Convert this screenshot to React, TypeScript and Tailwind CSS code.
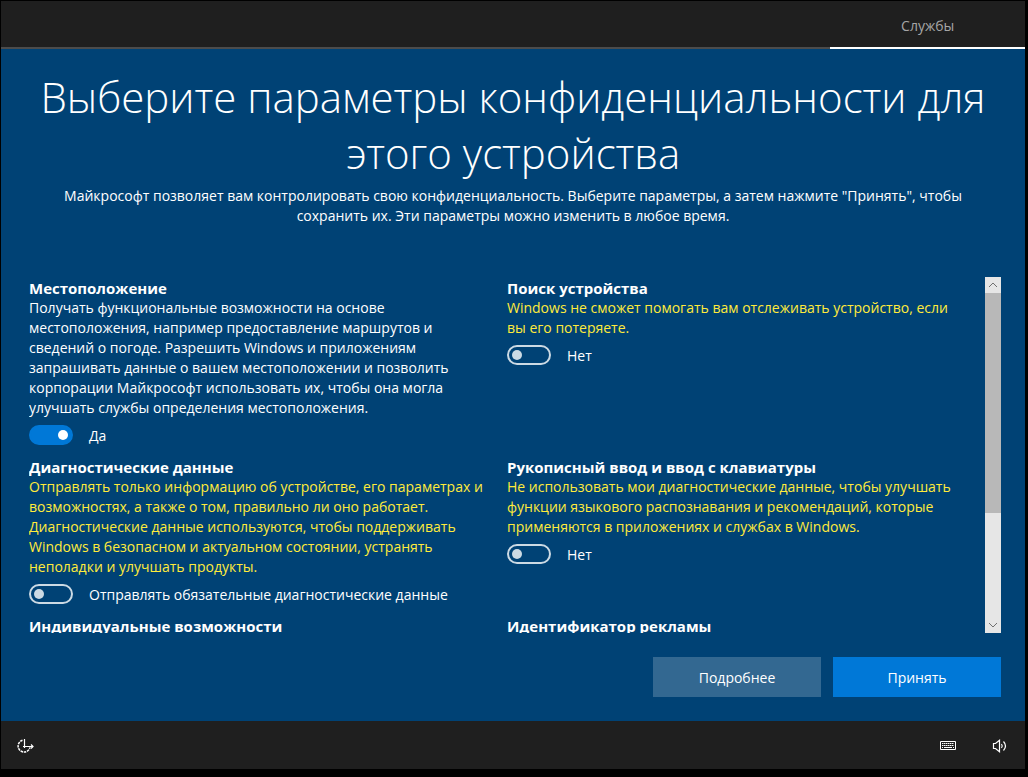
import { useState } from 'react';

interface Setting {
  id: string;
  title: string;
  enabledByDefault: boolean;
  text: string;
  state: { on: string; off: string };
}

const yesNo = { on: 'Да', off: 'Нет' };

const settings: Setting[] = [
  {
    id: 'location',
    title: 'Местоположение',
    enabledByDefault: true,
    text: 'Получать функциональные возможности на основе местоположения, например предоставление маршрутов и сведений о погоде. Разрешить Windows и приложениям запрашивать данные о вашем местоположении и позволить корпорации Майкрософт использовать их, чтобы она могла улучшать службы определения местоположения.',
    state: yesNo,
  },
  {
    id: 'find-device',
    title: 'Поиск устройства',
    enabledByDefault: false,
    text: 'Windows не сможет помогать вам отслеживать устройство, если вы его потеряете.',
    state: yesNo,
  },
  {
    id: 'diagnostics',
    title: 'Диагностические данные',
    enabledByDefault: false,
    text: 'Отправлять только информацию об устройстве, его параметрах и возможностях, а также о том, правильно ли оно работает. Диагностические данные используются, чтобы поддерживать Windows в безопасном и актуальном состоянии, устранять неполадки и улучшать продукты.',
    state: { on: 'Да', off: 'Отправлять обязательные диагностические данные' },
  },
  {
    id: 'inking',
    title: 'Рукописный ввод и ввод с клавиатуры',
    enabledByDefault: false,
    text: 'Не использовать мои диагностические данные, чтобы улучшать функции языкового распознавания и рекомендаций, которые применяются в приложениях и службах в Windows.',
    state: yesNo,
  },
];

function SettingItem({ setting }: { setting: Setting }) {
  const [enabled, setEnabled] = useState(setting.enabledByDefault);

  return (
    <section className="pr-5">
      <h2 className="text-[15px] leading-5 font-bold">{setting.title}</h2>
      <p className={enabled ? 'text-white' : 'text-[#ffeb3b]'}>{setting.text}</p>
      <div className="mt-[7px] flex h-5 items-center gap-4">
        <input
          id={setting.id}
          type="checkbox"
          checked={enabled}
          onChange={(e) => setEnabled(e.target.checked)}
          className="flex h-5 w-11 shrink-0 appearance-none items-center rounded-full border-2 border-[#ccdae4] px-[3px] before:size-2.5 before:rounded-full before:bg-[#ccdae4] checked:justify-end checked:border-[#0078d7] checked:bg-[#0078d7] checked:before:bg-white"
        />
        <label htmlFor={setting.id} className="pt-0.5">{enabled ? setting.state.on : setting.state.off}</label>
      </div>
    </section>
  );
}

function ScrollBar() {
  return (
    <div className="flex w-4 shrink-0 flex-col bg-[#e6e6e6] text-[#707070]">
      <button type="button" aria-label="Вверх" className="flex h-4 items-center justify-center">
        <svg width="10" height="6" viewBox="0 0 10 6" fill="none" stroke="currentColor">
          <path d="M1 5l4-4 4 4" />
        </svg>
      </button>
      <div className="flex flex-1 flex-col">
        <div className="h-[68%] bg-[#b8b8b8]" />
      </div>
      <button type="button" aria-label="Вниз" className="flex h-4 items-center justify-center">
        <svg width="10" height="6" viewBox="0 0 10 6" fill="none" stroke="currentColor">
          <path d="M1 1l4 4 4-4" />
        </svg>
      </button>
    </div>
  );
}

export default function App() {
  return (
    <div className="flex h-screen flex-col bg-black pt-px pr-[3px] pb-2 pl-px font-['Open_Sans','Noto_Sans',sans-serif] text-sm leading-5 text-white">
      <header className="flex h-12 shrink-0 justify-end">
        <div className="flex-1 border-b-2 border-[#4c4c4c] bg-[#1f1f1f]" />
        <div className="flex w-[19%] items-center justify-center border-b-2 border-white bg-[#1f1f1f] pt-1 text-[#a6a6a6]">Службы</div>
      </header>

      <main className="flex min-h-0 flex-1 flex-col bg-[#004275] pt-5 pr-6 pb-6 pl-7">
        <div className="pr-1 text-center">
          <h1 className="text-[42px] leading-14 font-light">Выберите параметры конфиденциальности для этого устройства</h1>
          <p className="mt-[5px] px-7">
            Майкрософт позволяет вам контролировать свою конфиденциальность. Выберите параметры, а затем нажмите "Принять", чтобы сохранить их. Эти параметры можно изменить в любое время.
          </p>
        </div>

        <div className="mt-[51px] flex min-h-0 flex-1">
          <div className="grid flex-1 grid-cols-2 content-start gap-y-3 overflow-hidden pt-px">
            {settings.map((setting) => (
              <SettingItem key={setting.id} setting={setting} />
            ))}
            <h2 className="text-[15px] leading-5 font-bold">Индивидуальные возможности</h2>
            <h2 className="text-[15px] leading-5 font-bold">Идентификатор рекламы</h2>
          </div>
          <ScrollBar />
        </div>

        <div className="mt-6 flex justify-end gap-3">
          <button type="button" className="h-10 w-42 bg-[#336891] pt-0.5">Подробнее</button>
          <button type="button" className="h-10 w-42 bg-[#0078d7] pt-0.5">Принять</button>
        </div>
      </main>

      <footer className="flex h-12 shrink-0 items-center justify-between bg-[#1f1f1f] pt-0.5 pr-[18px] pl-4">
        <button type="button" aria-label="Специальные возможности">
          <svg width="18" height="16" viewBox="0 0 18 16" fill="none" stroke="currentColor">
            <path d="M5.500 2.300a6 6 0 1 0 7.500 7" strokeWidth="1.5" strokeDasharray="2.500 .8" />
            <path d="M7.500 1v9" strokeWidth="1.2" />
            <path d="M6 8.500h10M14 6.500l2 2-2 2" strokeWidth="1.2" />
          </svg>
        </button>
        <div className="flex items-center gap-9">
          <button type="button" aria-label="Клавиатура">
            <svg width="16" height="10" viewBox="0 0 16 10" fill="none" stroke="currentColor">
              <path d="M.5.5h15v8H.5z" />
              <path d="M2 2.500h12M2 4.500h12" strokeDasharray="1.500 .5" />
              <path d="M2 6.500h1M4 6.500h8M13 6.500h1" />
            </svg>
          </button>
          <button type="button" aria-label="Громкость">
            <svg width="15" height="14" viewBox="0 0 15 14" fill="none" stroke="currentColor" strokeWidth="1.2">
              <path d="M1.500 4.500v5h2l4 3.200V1.300l-4 3.200z" />
              <path d="M9.500 5q1.500 2 0 4" />
              <path d="M11.500 2.500q4 4.500 0 9" />
            </svg>
          </button>
        </div>
      </footer>
    </div>
  );
}
